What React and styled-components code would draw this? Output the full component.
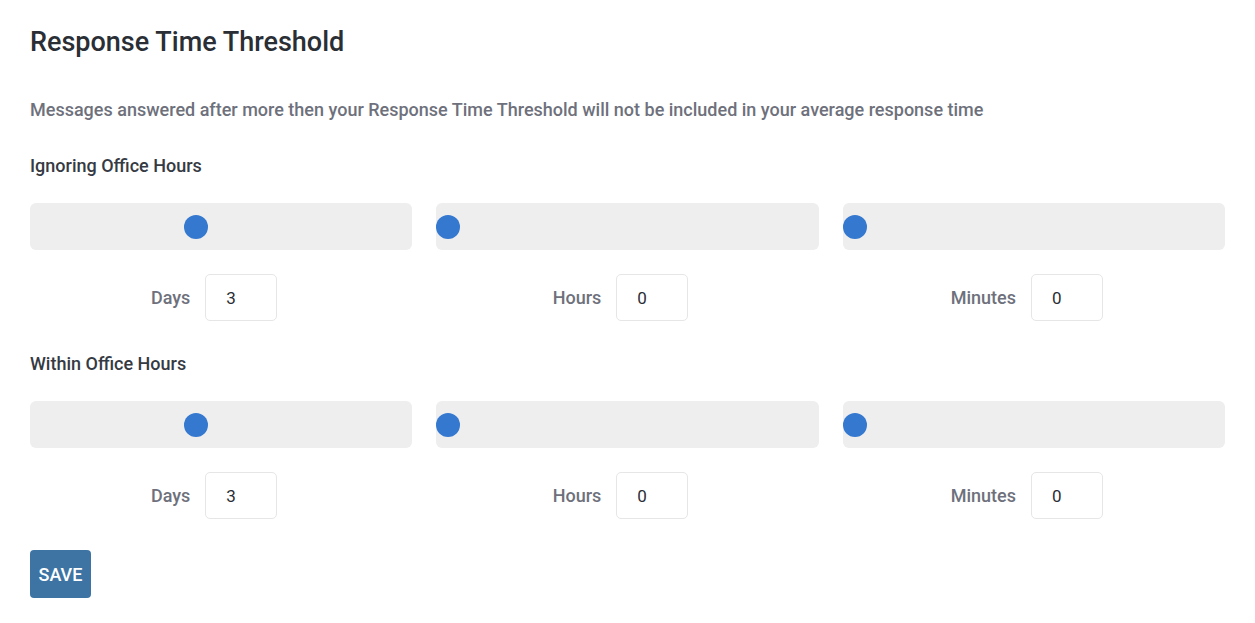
import React from "react";
import styled, { createGlobalStyle } from "styled-components";

const Global = createGlobalStyle`
  html, body { margin: 0; padding: 0; background: #fff; }
  body { font-family: Roboto, "Noto Sans", Arial, sans-serif; }
  * { box-sizing: border-box; }
`;

const Page = styled.div`
  padding: 24px 30px 20px 30px;
  width: 1255px;
`;

const Title = styled.h1`
  margin: 0;
  font-size: 27px;
  line-height: 36px;
  font-weight: 500;
  color: #2a2e35;
`;

const Description = styled.p`
  margin: 38px 0 0 0;
  font-size: 18px;
  line-height: 24px;
  font-weight: 500;
  color: #6e717c;
`;

const SectionTitle = styled.h3`
  margin: ${(p) => p.$top}px 0 0 0;
  font-size: 18px;
  line-height: 24px;
  font-weight: 500;
  color: #353a43;
`;

const Grid = styled.div`
  display: grid;
  grid-template-columns: repeat(3, 1fr);
  column-gap: 24px;
  width: 1195px;
  margin-top: 25px;
`;

const Column = styled.div`
  display: flex;
  flex-direction: column;
  gap: 24px;
`;

const Track = styled.div`
  position: relative;
  height: 47px;
  background: #eeeeee;
  border-radius: 6px;
`;

const Thumb = styled.div`
  position: absolute;
  top: 50%;
  width: 24px;
  height: 24px;
  margin-top: -12px;
  border-radius: 50%;
  background: #3478d0;
`;

const Field = styled.div`
  display: flex;
  justify-content: center;
  align-items: center;
  gap: 15px;
`;

const Label = styled.label`
  font-size: 18px;
  font-weight: 500;
  color: #6e717c;
`;

const NumberInput = styled.input`
  width: 72px;
  height: 47px;
  margin-right: 14px;
  padding: 0 20px;
  border: 1px solid #e6e6e6;
  border-radius: 5px;
  font-family: Roboto, "Noto Sans", Arial, sans-serif;
  font-size: 17px;
  color: #2a2e35;
  outline: none;
  background: #fff;
`;

const SaveButton = styled.button`
  margin-top: 31px;
  height: 48px;
  padding: 0 8.5px;
  border: none;
  border-radius: 4px;
  background: #3d74a4;
  color: #fff;
  font-family: Roboto, "Noto Sans", Arial, sans-serif;
  font-size: 18px;
  font-weight: 500;
  cursor: pointer;
`;

function SliderField({ label, value, max }) {
  const pct = value / max;
  return (
    <Column>
      <Track>
        <Thumb style={{ left: `calc(${pct} * (100% - 24px))` }} />
      </Track>
      <Field>
        <Label>{label}</Label>
        <NumberInput type="text" defaultValue={value} />
      </Field>
    </Column>
  );
}

function Section({ title, top }) {
  return (
    <>
      <SectionTitle $top={top}>{title}</SectionTitle>
      <Grid>
        <SliderField label="Days" value={3} max={7} />
        <SliderField label="Hours" value={0} max={23} />
        <SliderField label="Minutes" value={0} max={59} />
      </Grid>
    </>
  );
}

export default function App() {
  return (
    <>
      <Global />
      <Page>
        <Title>Response Time Threshold</Title>
        <Description>
          Messages answered after more then your Response Time Threshold will not be included in your average response time
        </Description>
        <Section title="Ignoring Office Hours" top={32} />
        <Section title="Within Office Hours" top={31} />
        <SaveButton>SAVE</SaveButton>
      </Page>
    </>
  );
}
